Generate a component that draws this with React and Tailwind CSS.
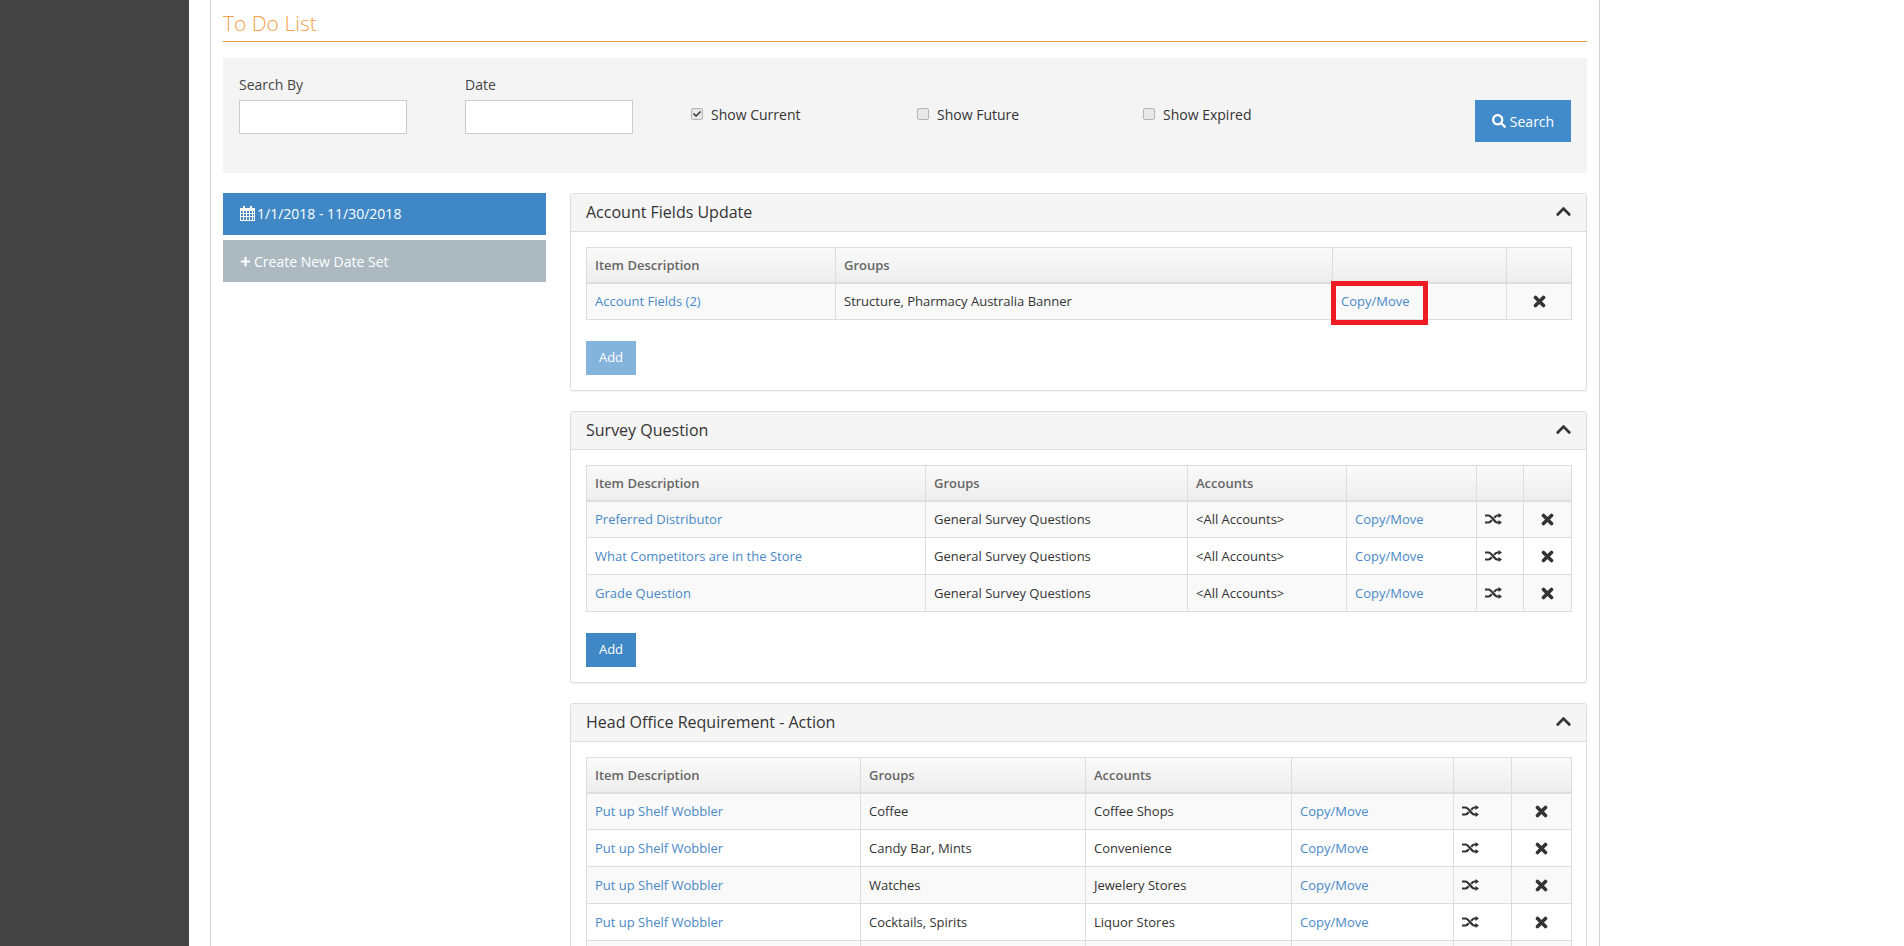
import React from 'react'
import { FaCheck, FaChevronUp, FaPlus, FaSearch } from 'react-icons/fa'

const sections = [
  {
    title: 'Account Fields Update',
    faded: true,
    widths: ['w-[249px]', 'w-[497px]', 'w-[174px]', 'w-[65px]'],
    columns: ['Item Description', 'Groups', '', ''],
    rows: [['Account Fields (2)', 'Structure, Pharmacy Australia Banner']],
    boxed: true,
  },
  {
    title: 'Survey Question',
    widths: ['w-[339px]', 'w-[262px]', 'w-[159px]', 'w-[130px]', 'w-[47px]', 'w-[48px]'],
    columns: ['Item Description', 'Groups', 'Accounts', '', '', ''],
    rows: [
      ['Preferred Distributor', 'General Survey Questions', '<All Accounts>'],
      ['What Competitors are in the Store', 'General Survey Questions', '<All Accounts>'],
      ['Grade Question', 'General Survey Questions', '<All Accounts>'],
    ],
    shuffle: true,
  },
  {
    title: 'Head Office Requirement - Action',
    widths: ['w-[274px]', 'w-[225px]', 'w-[206px]', 'w-[162px]', 'w-[58px]', 'w-[60px]'],
    columns: ['Item Description', 'Groups', 'Accounts', '', '', ''],
    rows: [
      ['Put up Shelf Wobbler', 'Coffee', 'Coffee Shops'],
      ['Put up Shelf Wobbler', 'Candy Bar, Mints', 'Convenience'],
      ['Put up Shelf Wobbler', 'Watches', 'Jewelery Stores'],
      ['Put up Shelf Wobbler', 'Cocktails, Spirits', 'Liquor Stores'],
      ['', '', ''],
    ],
    shuffle: true,
  },
]

const cell = 'border border-[#ddd] px-2 align-middle'

// heavy X, the icon set's version is too thin at this size
const CloseIcon = () => (
  <svg width="13" height="13" viewBox="0 0 13 13" className="mx-auto block">
    <path d="M2.5 2.5L10.5 10.5M10.5 2.5L2.5 10.5" stroke="currentColor" strokeWidth="3.6" strokeLinecap="round" />
  </svg>
)

const ShuffleIcon = () => (
  <svg width="17" height="12" viewBox="0 0 17 12" fill="none" className="block">
    <path d="M0 2.5H3.5C7 2.5 9 9.5 12.5 9.5H14M0 9.5H3.5C5 9.5 6 8.4 6.8 7.2M9.2 4.8C10 3.6 11 2.5 12.5 2.5H14" stroke="currentColor" strokeWidth="2.2" />
    <path d="M13.5 0L17 2.5L13.5 5ZM13.5 7L17 9.5L13.5 12Z" fill="currentColor" />
  </svg>
)

const CalendarIcon = () => (
  <svg width="15" height="15" viewBox="0 0 15 15" className="block">
    <path fill="currentColor" fillRule="evenodd" d="M3 0H5V2H10V0H12V2H15V15H0V2H3ZM1 5V7H3V5ZM4 5V7H6V5ZM7 5V7H9V5ZM10 5V7H12V5ZM13 5V7H14V5ZM1 8V10H3V8ZM4 8V10H6V8ZM7 8V10H9V8ZM10 8V10H12V8ZM13 8V10H14V8ZM1 11V14H3V11ZM4 11V14H6V11ZM7 11V14H9V11ZM10 11V14H12V11ZM13 11V14H14V11Z" />
  </svg>
)

function Panel({ section }) {
  return (
    <section className="mb-[20px] rounded-[3px] border border-[#ddd] bg-white shadow-[0_1px_1px_rgba(0,0,0,0.05)]">
      <div className="flex h-[38px] items-center justify-between border-b border-[#ddd] bg-[#f5f5f5] pb-[2px] pl-[15px] pr-[14px]">
        <h3 className="text-[16px] text-[#333]">{section.title}</h3>
        <FaChevronUp className="text-[17px] text-[#333]" />
      </div>
      <div className="px-[15px] pt-[15px] pb-[15px]">
        <table className="w-[985px] table-fixed border-collapse">
          <colgroup>
            {section.widths.map((w, i) => <col key={i} className={w} />)}
          </colgroup>
          <thead>
            <tr className="h-[35px] bg-gradient-to-b from-[#fafafa] to-[#ededed]">
              {section.columns.map((c, i) => (
                <th key={i} className={`${cell} border-b-2 pt-[2px] text-left font-semibold text-[#666]`}>{c}</th>
              ))}
            </tr>
          </thead>
          <tbody>
            {section.rows.map((row, i) => (
              <tr key={i} className={`h-[37px] ${i % 2 === 0 ? 'bg-[#f9f9f9]' : 'bg-white'}`}>
                <td className={`${cell} pt-[1px] text-[#4a89c8]`}>{row[0]}</td>
                {row.slice(1).map((v, j) => (
                  <td key={j} className={`${cell} pt-[1px] text-[#333]`}>{v}</td>
                ))}
                <td className={`${cell} relative pt-[1px] text-[#4a89c8]`}>
                  {row[0] && 'Copy/Move'}
                  {section.boxed && (
                    <span className="absolute left-[-2px] top-[-3px] h-[44px] w-[97px] border-[5px] border-[#ed1c24]" />
                  )}
                </td>
                {section.shuffle && (
                  <td className={`${cell} text-[#333]`}>{row[0] && <ShuffleIcon />}</td>
                )}
                <td className={`${cell} text-[#333]`}>{row[0] && <CloseIcon />}</td>
              </tr>
            ))}
          </tbody>
        </table>
        <button className={`mt-[21px] h-[34px] w-[50px] text-white ${section.faded ? 'bg-[#84b3dc]' : 'bg-[#3f88c5]'}`}>
          Add
        </button>
      </div>
    </section>
  )
}

function Check({ label, checked }) {
  return (
    <label className="flex h-[34px] w-[226px] items-start gap-[8px] pt-[4px] text-[14px] text-[#333]">
      <span className="relative mt-[4px] block h-[12px] w-[12px]">
        <input
          type="checkbox"
          defaultChecked={checked}
          className="block h-[12px] w-[12px] appearance-none rounded-[2px] border border-[#b4b4b4] bg-[#e8e8e8]"
        />
        {checked && <FaCheck className="absolute left-[2px] top-[2px] text-[8px] text-[#333]" />}
      </span>
      {label}
    </label>
  )
}

export default function App() {
  return (
    <div className="flex h-[946px] overflow-hidden bg-white font-['Open_Sans',sans-serif] text-[13px]">
      <div className="w-[189px] shrink-0 bg-[#444]" />
      <main className="ml-[21px] h-fit w-[1390px] shrink-0 border-x border-[#c9d3da] px-[12px]">
        <h1 className="h-[42px] border-b border-[#f09a3e] pt-[9px] text-[21px] font-light leading-[28px] text-[#f5a04a]">
          To Do List
        </h1>
        <div className="mt-[16px] flex h-[115px] items-start bg-[#f4f4f4] pl-[16px] pr-[16px] pt-[15px]">
          <div className="w-[226px]">
            <label className="block h-[27px] text-[14px] leading-[24px] text-[#444]">Search By</label>
            <input className="h-[34px] w-[168px] border border-[#ccc] bg-white" />
          </div>
          <div className="w-[226px]">
            <label className="block h-[27px] text-[14px] leading-[24px] text-[#444]">Date</label>
            <input className="h-[34px] w-[168px] border border-[#ccc] bg-white" />
          </div>
          <div className="mt-[27px] flex flex-1">
            <Check label="Show Current" checked />
            <Check label="Show Future" />
            <Check label="Show Expired" />
          </div>
          <button className="mt-[27px] flex h-[42px] w-[96px] items-center justify-center gap-[4px] bg-[#428bca] text-[14px] text-white">
            <FaSearch className="text-[14px]" /> Search
          </button>
        </div>
        <div className="mt-[20px] flex items-start">
          <aside className="w-[323px] shrink-0">
            <div className="flex h-[42px] items-center gap-[2px] bg-[#3f88c5] pb-[2px] pl-[17px] text-[14px] text-white">
              <CalendarIcon /> 1/1/2018 - 11/30/2018
            </div>
            <div className="mt-[5px] flex h-[42px] items-center gap-[3px] bg-[#acb9c1] pl-[17px] text-[14px] text-white">
              <FaPlus className="text-[11px]" /> Create New Date Set
            </div>
          </aside>
          <div className="ml-[24px] w-[1017px]">
            {sections.map(s => <Panel key={s.title} section={s} />)}
          </div>
        </div>
      </main>
    </div>
  )
}
